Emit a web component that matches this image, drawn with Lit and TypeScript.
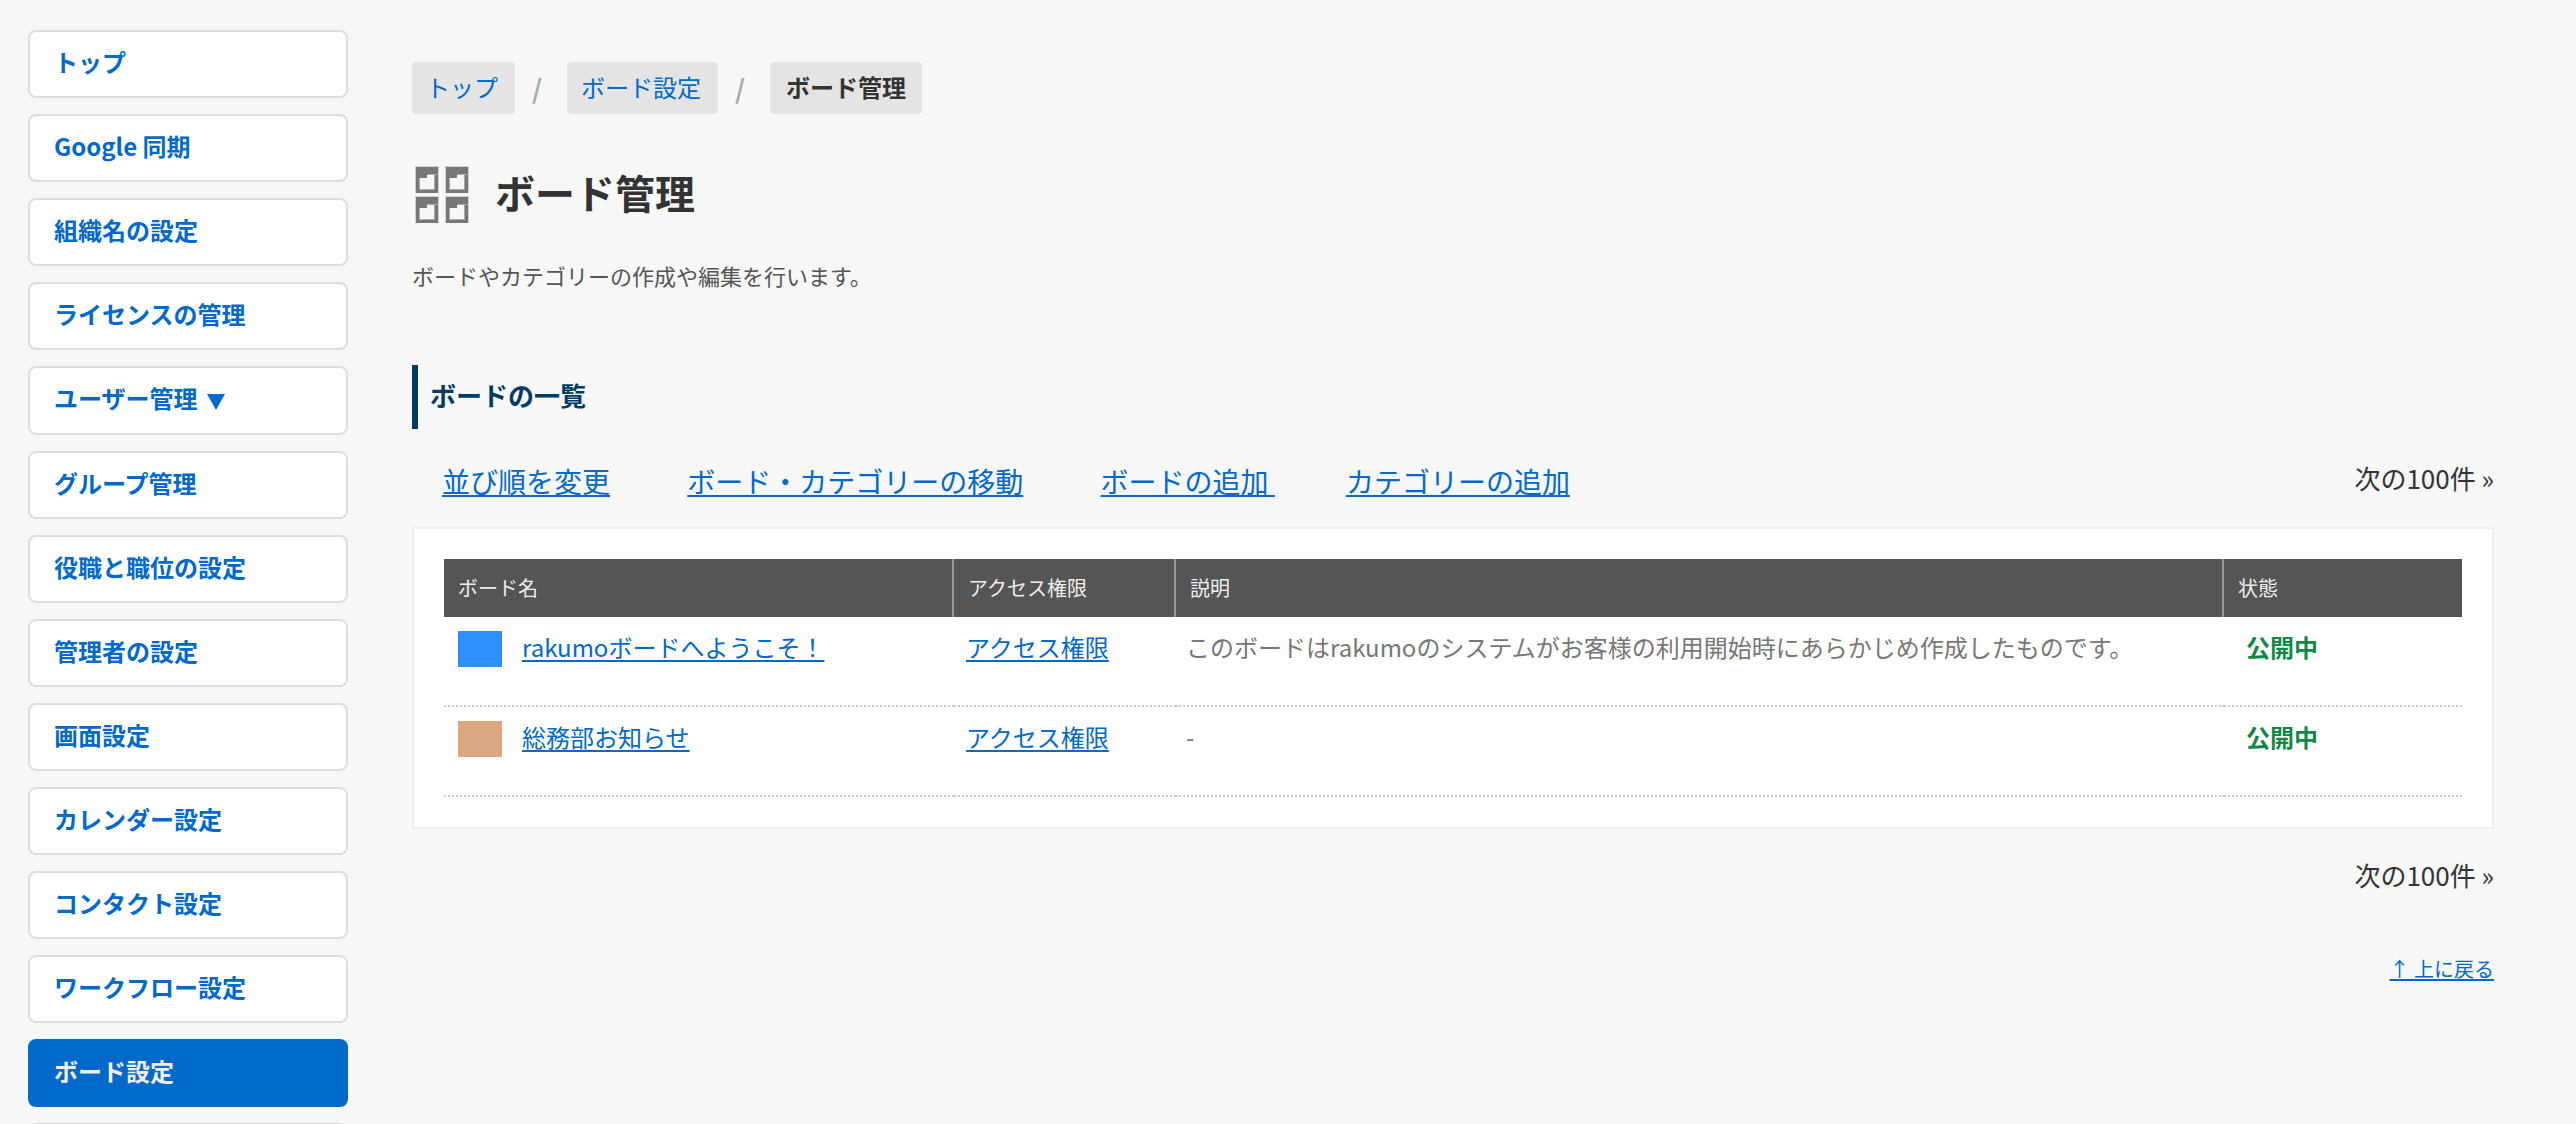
import { LitElement, html, css } from "lit";
import { customElement } from "lit/decorators.js";
import { classMap } from "lit/directives/class-map.js";

interface NavItem {
  label: string;
  active?: boolean;
  submenu?: boolean;
}

interface Board {
  name: string;
  tone: string;
  description: string;
  status: string;
}

const NAV: NavItem[] = [
  { label: "トップ" },
  { label: "Google 同期" },
  { label: "組織名の設定" },
  { label: "ライセンスの管理" },
  { label: "ユーザー管理", submenu: true },
  { label: "グループ管理" },
  { label: "役職と職位の設定" },
  { label: "管理者の設定" },
  { label: "画面設定" },
  { label: "カレンダー設定" },
  { label: "コンタクト設定" },
  { label: "ワークフロー設定" },
  { label: "ボード設定", active: true },
];

const BOARDS: Board[] = [
  {
    name: "rakumoボードへようこそ！",
    tone: "blue",
    description:
      "このボードはrakumoのシステムがお客様の利用開始時にあらかじめ作成したものです。",
    status: "公開中",
  },
  { name: "総務部お知らせ", tone: "tan", description: "-", status: "公開中" },
];

@customElement("side-nav")
export class SideNav extends LitElement {
  static styles = css`
    :host {
      display: block;
    }
    .list {
      display: flex;
      flex-direction: column;
      gap: 16px;
    }
    .item {
      display: block;
      box-sizing: border-box;
      min-height: 68px;
      padding: 14px 24px 18px;
      border: 2px solid #ddd;
      border-radius: 8px;
      background: #fff;
      color: #0069ca;
      font-weight: 700;
      font-size: 24px;
      line-height: 32px;
      text-decoration: none;
    }
    .submenu {
      min-height: 69px;
    }
    .active {
      border-color: #0069ca;
      background: #0069ca;
      color: #eee;
    }
    .arrow {
      width: 18px;
      height: 16px;
      margin-left: 4px;
      vertical-align: -2px;
      fill: currentColor;
    }
  `;

  render() {
    return html`
      <nav class="list">
        ${NAV.map(
          (n) => html`<a
            href="#"
            class=${classMap({ item: true, active: !!n.active, submenu: !!n.submenu })}
            >${n.label}${n.submenu
              ? html` <svg class="arrow" viewBox="0 0 18 16" aria-hidden="true">
                    <path d="M0 0h18L9 16z" />
                  </svg>`
              : ""}</a
          >`
        )}
        <div class="item"></div>
      </nav>
    `;
  }
}

@customElement("board-table")
export class BoardTable extends LitElement {
  static styles = css`
    :host {
      display: block;
      padding: 30px;
      border: 2px solid #eee;
      background: #fff;
    }
    .table {
      width: 100%;
      table-layout: fixed;
      border-collapse: separate;
      border-spacing: 0;
    }
    .col-name {
      width: 510px;
    }
    .col-access {
      width: 222px;
    }
    .col-status {
      width: 238px;
    }
    .head {
      box-sizing: border-box;
      height: 58px;
      padding: 0 14px;
      border-right: 2px solid #999;
      background: #555;
      color: #eee;
      font-weight: 400;
      font-size: 20px;
      line-height: 28px;
      text-align: left;
    }
    .head:last-child {
      border-right: 0;
    }
    .cell {
      box-sizing: border-box;
      height: 90px;
      padding: 14px 12px;
      border-bottom: 2px dotted #ccc;
      color: #777;
      font-size: 24px;
      line-height: 32px;
      vertical-align: top;
    }
    .name {
      display: flex;
      align-items: flex-start;
      gap: 20px;
      padding-left: 2px;
    }
    .swatch {
      flex: none;
      width: 44px;
      height: 36px;
    }
    .blue {
      background: #2e90ff;
    }
    .tan {
      background: #dca780;
    }
    .link {
      color: #0069ca;
      text-decoration: underline 2px;
      text-underline-offset: 3px;
    }
    .description {
      padding-left: 10px;
    }
    .status {
      padding-left: 22px;
      color: #118844;
      font-weight: 700;
    }
  `;

  render() {
    return html`
      <table class="table">
        <colgroup>
          <col class="col-name" />
          <col class="col-access" />
          <col />
          <col class="col-status" />
        </colgroup>
        <thead>
          <tr>
            <th class="head" scope="col">ボード名</th>
            <th class="head" scope="col">アクセス権限</th>
            <th class="head" scope="col">説明</th>
            <th class="head" scope="col">状態</th>
          </tr>
        </thead>
        <tbody>
          ${BOARDS.map(
            (b) => html`<tr>
              <td class="cell">
                <div class="name">
                  <span class="swatch ${b.tone}"></span>
                  <a class="link" href="#">${b.name}</a>
                </div>
              </td>
              <td class="cell"><a class="link" href="#">アクセス権限</a></td>
              <td class="cell description">${b.description}</td>
              <td class="cell status">${b.status}</td>
            </tr>`
          )}
        </tbody>
      </table>
    `;
  }
}

@customElement("app-root")
export class AppRoot extends LitElement {
  static styles = css`
    :host {
      display: block;
      box-sizing: border-box;
      height: 100vh;
      overflow: hidden;
      background: #f7f7f7;
      color: #333;
      font-family: "Noto Sans CJK JP", sans-serif;
      font-size: 24px;
      line-height: 36px;
    }
    .page {
      display: grid;
      grid-template-columns: 320px minmax(0, 1fr);
      column-gap: 64px;
      padding: 30px 82px 0 28px;
    }
    .main {
      padding-top: 32px;
    }
    .crumbs {
      display: flex;
      align-items: center;
      margin: 0;
      padding: 0;
      list-style: none;
    }
    .crumb {
      display: flex;
      align-items: center;
    }
    .crumb + .crumb::before {
      content: "/";
      box-sizing: border-box;
      width: 52px;
      padding-right: 8px;
      color: #aaa;
      font-weight: 700;
      font-size: 26px;
      text-align: center;
    }
    .chip {
      padding: 7px 17px 9px 14px;
      border-radius: 4px;
      background: #e4e4e4;
      color: #0069ca;
      text-decoration: none;
    }
    .current {
      padding-left: 16px;
      padding-right: 16px;
      color: #333;
      font-weight: 700;
    }
    .title {
      display: flex;
      align-items: center;
      gap: 26px;
      margin: 48px 0 0;
      padding-left: 3px;
      font-size: 40px;
      line-height: 60px;
    }
    .title-text {
      padding-bottom: 6px;
    }
    .icon {
      width: 54px;
      height: 58px;
    }
    .lead {
      margin: 29px 0 0;
      color: #555;
      font-size: 22px;
    }
    .section {
      margin: 72px 0 0;
      padding: 12px 12px 16px;
      border-left: 6px solid #003b66;
      color: #003b66;
      font-size: 26px;
    }
    .toolbar {
      display: flex;
      justify-content: space-between;
      align-items: center;
      margin: 29px 0;
      padding-left: 30px;
      line-height: 34px;
    }
    .actions {
      padding-top: 6px;
      font-size: 28px;
    }
    .link {
      color: #0069ca;
      text-decoration: underline 2px;
      text-underline-offset: 2px;
    }
    .action {
      margin-right: 71px;
    }
    .pager {
      font-size: 26px;
    }
    .footer {
      display: flex;
      flex-direction: column;
      align-items: flex-end;
      gap: 58px;
      margin-top: 28px;
    }
    .back {
      font-size: 20px;
    }
  `;

  render() {
    return html`
      <div class="page">
        <side-nav></side-nav>
        <main class="main">
          <ol class="crumbs">
            <li class="crumb"><a class="chip" href="#">トップ</a></li>
            <li class="crumb"><a class="chip" href="#">ボード設定</a></li>
            <li class="crumb"><span class="chip current">ボード管理</span></li>
          </ol>
          <h1 class="title">
            <svg class="icon" viewBox="0 0 54 58" aria-hidden="true">
              <defs>
                <g id="note">
                  <path fill="#d0d0d0" d="M0 0h24v27H0z" />
                  <path fill="#777" d="M1 1h22v26H1z" />
                  <path fill="#aaa" d="M4 12h8V8h11v1h-3v15H4z" />
                  <path fill="#f7f7f7" d="M5 12h7V9h7v14H5z" />
                </g>
              </defs>
              <use href="#note" />
              <use href="#note" x="30" />
              <use href="#note" y="30" />
              <use href="#note" x="30" y="30" />
            </svg>
            <span class="title-text">ボード管理</span>
          </h1>
          <p class="lead">ボードやカテゴリーの作成や編集を行います。</p>
          <h2 class="section">ボードの一覧</h2>
          <div class="toolbar">
            <div class="actions">
              <a class="link action" href="#">並び順を変更</a>
              <a class="link action" href="#">ボード・カテゴリーの移動</a>
              <a class="link action" href="#">ボードの追加 </a>
              <a class="link action" href="#">カテゴリーの追加</a>
            </div>
            <span class="pager">次の100件 »</span>
          </div>
          <board-table></board-table>
          <div class="footer">
            <span class="pager">次の100件 »</span>
            <a class="link back" href="#">↑ 上に戻る</a>
          </div>
        </main>
      </div>
    `;
  }
}
